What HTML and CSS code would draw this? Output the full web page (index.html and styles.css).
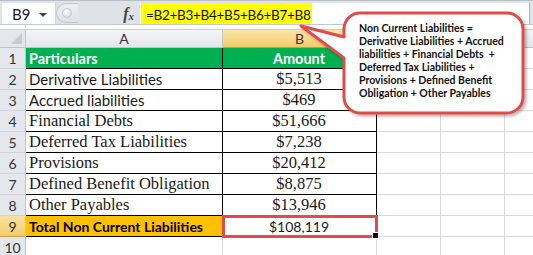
FILE: index.html
```html
<!DOCTYPE html>
<html>
<head>
<meta charset="utf-8">
<link rel="stylesheet" href="styles.css">
</head>
<body>
<div class="app">
  <div class="fbar">
    <div class="namebox">
      <span class="ref">B9</span>
      <span class="dd"></span>
    </div>
    <div class="knob"><span class="dot"></span></div>
    <div class="fx"><i>f</i><i class="x">x</i></div>
    <div class="input"><span class="formula">=B2+B3+B4+B5+B6+B7+B8</span></div>
  </div>
  <div class="gap"><span class="gapcell"></span></div>
  <div class="sheet">
    <div class="corner"><span class="tri"></span></div>
    <div class="ch">A</div>
    <div class="ch sel">B</div>
    <div class="ch"></div>
    <div class="ch"></div>
    <div class="ch last"></div>

    <div class="rh">1</div>
    <div class="c t head">Particulars</div>
    <div class="c t head center">Amount</div>
    <div class="c"></div><div class="c"></div><div class="c last"></div>

    <div class="rh">2</div>
    <div class="c t sans">Derivative Liabilities</div>
    <div class="c t serif center">$5,513</div>
    <div class="c"></div><div class="c"></div><div class="c last"></div>

    <div class="rh">3</div>
    <div class="c t sans">Accrued liabilities</div>
    <div class="c t serif center">$469</div>
    <div class="c"></div><div class="c"></div><div class="c last"></div>

    <div class="rh">4</div>
    <div class="c t serif">Financial Debts</div>
    <div class="c t serif center">$51,666</div>
    <div class="c"></div><div class="c"></div><div class="c last"></div>

    <div class="rh">5</div>
    <div class="c t serif">Deferred Tax Liabilities</div>
    <div class="c t serif center">$7,238</div>
    <div class="c"></div><div class="c"></div><div class="c last"></div>

    <div class="rh">6</div>
    <div class="c t serif">Provisions</div>
    <div class="c t serif center">$20,412</div>
    <div class="c"></div><div class="c"></div><div class="c last"></div>

    <div class="rh">7</div>
    <div class="c t serif">Defined Benefit Obligation</div>
    <div class="c t serif center">$8,875</div>
    <div class="c"></div><div class="c"></div><div class="c last"></div>

    <div class="rh">8</div>
    <div class="c t serif">Other Payables</div>
    <div class="c t serif center">$13,946</div>
    <div class="c"></div><div class="c"></div><div class="c last"></div>

    <div class="rh sel">9</div>
    <div class="c t total">Total Non Current Liabilities</div>
    <div class="c t sans center active">$108,119</div>
    <div class="c"></div><div class="c"></div><div class="c last"></div>

    <div class="rh">10</div>
    <div class="c"></div>
    <div class="c"></div>
    <div class="c"></div><div class="c"></div><div class="c last"></div>
  </div>

  <svg class="callout" width="533" height="255" viewBox="0 0 533 255">
    <defs>
      <filter id="sh" x="-10%" y="-10%" width="130%" height="130%">
        <feDropShadow dx="2" dy="2" stdDeviation="1.5" flood-color="#000" flood-opacity="0.3"/>
      </filter>
    </defs>
    <path d="M360 13 H507 A16 16 0 0 1 523 29 V97 A16 16 0 0 1 507 113 H360 A16 16 0 0 1 344 97 V58 L301 26 L344 37 V29 A16 16 0 0 1 360 13 Z" fill="#ffffff" stroke="#e24b4b" stroke-width="3" stroke-linejoin="round" filter="url(#sh)"/>
  </svg>
  <div class="note">
    <div>Non Current Liabilities =</div>
    <div>Derivative Liabilities + Accrued</div>
    <div>liabilities + Financial Debts&nbsp; +</div>
    <div>Deferred Tax Liabilities +</div>
    <div>Provisions + Defined Benefit</div>
    <div>Obligation + Other Payables</div>
  </div>
</div>
</body>
</html>
```
FILE: styles.css
```css
* { box-sizing: border-box; }
html, body { margin: 0; padding: 0; background: #fff; }
body { width: 533px; height: 255px; overflow: hidden; font-family: "Lato", "Liberation Sans", sans-serif; }
.app { position: relative; width: 533px; height: 255px; }

.fbar {
  display: flex;
  align-items: stretch;
  height: 25px;
  background: #dfe3e8;
  border-top: 1px solid #b9bec5;
  border-bottom: 1px solid #c3c8ce;
  padding: 2px 3px 0 2px;
}
.namebox {
  width: 54px;
  background: #fff;
  display: flex;
  align-items: center;
  justify-content: space-between;
  padding: 0 8px 0 10px;
  border-right: 1px solid #d0d4d9;
}
.ref { font-size: 15px; color: #1a1a1a; }
.dd { width: 0; height: 0; border-left: 4px solid transparent; border-right: 4px solid transparent; border-top: 4px solid #444; margin-top: 2px; }
.knob {
  width: 22px;
  background: linear-gradient(#eef0f3, #dde1e6);
  border: 1px solid #c2c7cd;
  border-right: none;
  border-radius: 11px 0 0 11px;
  margin: 0 0 1px 0;
  display: flex;
  align-items: center;
  padding-left: 5px;
}
.dot { width: 10px; height: 10px; border-radius: 50%; background: radial-gradient(circle at 40% 35%, #fff, #cfd3d8); border: 1px solid #c7ccd2; }
.fx {
  width: 62px;
  display: flex;
  align-items: center;
  justify-content: flex-end;
  padding-right: 6px;
  font-family: "Liberation Serif", serif;
  font-size: 16px;
  font-weight: bold;
  color: #444;
}
.fx .x { font-size: 11px; margin-top: 5px; }
.input {
  flex: 1;
  background: #fff;
  border-right: 1px solid #aeb3ba;
  display: flex;
  align-items: stretch;
}
.formula {
  background: #ffff00;
  font-size: 13.5px;
  letter-spacing: -0.3px;
  color: #111;
  padding: 2px 4px 0 5px;
  width: 171px;
  display: flex;
  align-items: center;
  margin-left: 1px;
  white-space: nowrap;
}

.gap { height: 5px; background: #fff; border-bottom: 1px solid #c9ccd1; display: flex; }
.gapcell { width: 26px; border-right: 1px solid #d6d9dd; }

.sheet {
  display: grid;
  grid-template-columns: 26px 197px 154px 64px 64px 1fr;
  grid-template-rows: 18px repeat(10, 21px);
}
.corner {
  background: #e4e7eb;
  border-right: 1px solid #bfc4ca;
  border-bottom: 1px solid #bfc4ca;
  position: relative;
}
.tri { position: absolute; right: 3px; bottom: 3px; width: 0; height: 0; border-left: 11px solid transparent; border-bottom: 11px solid #c8ccd1; }
.ch {
  background: linear-gradient(#f4f5f7, #e3e6ea);
  border-right: 1px solid #c3c7cd;
  border-bottom: 1px solid #bfc4ca;
  display: flex;
  align-items: center;
  justify-content: center;
  font-size: 14px;
  color: #333;
}
.ch.sel { background: linear-gradient(#fbe6a8, #f4cb6a); border-right-color: #d9b15a; border-bottom-color: #c99c3c; }
.ch.last { border-right: none; }
.rh {
  background: #e4e7eb;
  border-right: 1px solid #bfc4ca;
  border-bottom: 1px solid #d0d4d9;
  display: flex;
  align-items: flex-end;
  justify-content: center;
  padding-bottom: 1px;
  font-size: 14px;
  color: #333;
}
.rh.sel { background: linear-gradient(#fbe2a0, #f3cb6d); border-bottom-color: #c9a149; }
.c {
  border-right: 1px solid #d9dadb;
  border-bottom: 1px solid #d9dadb;
}
.c.last { border-right: none; }
.t {
  border-right: 1px solid #000;
  border-bottom: 1px solid #000;
  display: flex;
  align-items: flex-end;
  padding: 0 4px 1px 3px;
  white-space: nowrap;
  color: #1a1a1a;
  position: relative;
}
.head { background: #00b050; color: #fff; font-weight: bold; font-size: 14.5px; }
.center { justify-content: center; }
.sans { font-size: 15px; }
.serif { font-family: "Liberation Serif", serif; font-size: 16.5px; padding-bottom: 0; }
.total { background: #ffc000; font-weight: bold; font-size: 14px; color: #000; }
.active { outline: 3px solid #e24b4b; outline-offset: -2px; font-size: 14px; }
.active::after {
  content: "";
  position: absolute;
  right: -3px;
  bottom: -3px;
  width: 5px;
  height: 5px;
  background: #000;
  border: 1px solid #fff;
}

.callout { position: absolute; left: 0; top: 0; pointer-events: none; }
.note {
  position: absolute;
  left: 359px;
  top: 22px;
  font-size: 10.5px;
  line-height: 13px;
  font-weight: bold;
  color: #111;
  white-space: nowrap;
}
```
